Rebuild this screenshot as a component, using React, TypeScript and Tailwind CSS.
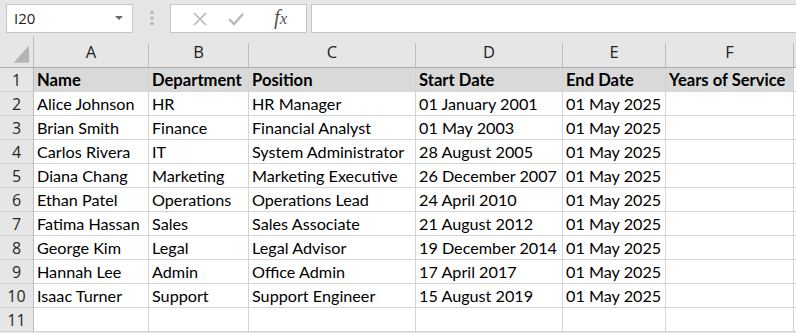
import React from "react";

const cols = [
  { l: "A", w: "w-[115px]" },
  { l: "B", w: "w-[100px]" },
  { l: "C", w: "w-[167px]" },
  { l: "D", w: "w-[147px]" },
  { l: "E", w: "w-[103px]" },
  { l: "F", w: "w-[128px]" },
];

const header = ["Name", "Department", "Position", "Start Date", "End Date", "Years of Service"];

const data: string[][] = [
  ["Alice Johnson", "HR", "HR Manager", "01 January 2001", "01 May 2025", ""],
  ["Brian Smith", "Finance", "Financial Analyst", "01 May 2003", "01 May 2025", ""],
  ["Carlos Rivera", "IT", "System Administrator", "28 August 2005", "01 May 2025", ""],
  ["Diana Chang", "Marketing", "Marketing Executive", "26 December 2007", "01 May 2025", ""],
  ["Ethan Patel", "Operations", "Operations Lead", "24 April 2010", "01 May 2025", ""],
  ["Fatima Hassan", "Sales", "Sales Associate", "21 August 2012", "01 May 2025", ""],
  ["George Kim", "Legal", "Legal Advisor", "19 December 2014", "01 May 2025", ""],
  ["Hannah Lee", "Admin", "Office Admin", "17 April 2017", "01 May 2025", ""],
  ["Isaac Turner", "Support", "Support Engineer", "15 August 2019", "01 May 2025", ""],
  ["", "", "", "", "", ""],
];

const cellFont = { fontFamily: "Lato, Carlito, Calibri, sans-serif" };
const uiFont = { fontFamily: "'Open Sans', 'Noto Sans', sans-serif" };

function Row({ n, cells, bold }: { n: number; cells: string[]; bold?: boolean }) {
  return (
    <div className="flex h-[24px]">
      <div
        className="w-[34px] shrink-0 h-full bg-[#e6e6e6] border-r border-b border-r-[#bdbdbd] border-b-[#d4d4d4] flex items-center justify-center text-[16px] text-[#262626]"
        style={uiFont}
      >
        {n}
      </div>
      {cols.map((c, i) => (
        <div
          key={i}
          className={`${c.w} shrink-0 h-full border-r border-b border-[#d4d4d4] flex items-end pb-[1px] pl-[3px] whitespace-nowrap overflow-visible leading-[20px] text-black ${
            bold ? "bg-[#d9d9d9] font-bold text-[16.6px]" : "bg-white text-[16.2px]"
          }`}
          style={cellFont}
        >
          {cells[i]}
        </div>
      ))}
      <div className="flex-1 h-full bg-white border-b border-[#d4d4d4]" />
    </div>
  );
}

export default function App() {
  return (
    <div className="w-[796px] h-[333px] overflow-hidden bg-[#e6e6e6] select-none">
      {/* formula bar */}
      <div className="flex items-center h-[36px]">
        <div
          className="ml-[6px] mt-[1px] w-[127px] h-[29px] bg-white border border-[#c6c6c6] flex items-center justify-between pl-[7px] pr-[9px] text-[15px] text-[#222]"
          style={uiFont}
        >
          <span>I20</span>
          <svg width="8" height="5" viewBox="0 0 8 5">
            <path d="M0 0 L8 0 L4 4 Z" fill="#6b6b6b" />
          </svg>
        </div>
        <div className="w-[37px] flex justify-center">
          <svg width="4" height="14" viewBox="0 0 4 14">
            <rect x="0.5" y="0" width="3" height="3" fill="#b5b5b5" />
            <rect x="0.5" y="5.5" width="3" height="3" fill="#b5b5b5" />
            <rect x="0.5" y="11" width="3" height="3" fill="#b5b5b5" />
          </svg>
        </div>
        <div className="mt-[1px] w-[137px] h-[29px] bg-white border border-[#c6c6c6] flex items-center">
          <div className="w-[40px] flex justify-end pr-[4px]">
            <svg width="14" height="14" viewBox="0 0 14 14">
              <path d="M1 1 L13 13 M13 1 L1 13" stroke="#b8b8b8" strokeWidth="1.6" />
            </svg>
          </div>
          <div className="w-[50px] flex justify-center">
            <svg width="16" height="14" viewBox="0 0 16 14">
              <path d="M1 7 L6 12 L15 2" stroke="#b8b8b8" strokeWidth="2.4" fill="none" />
            </svg>
          </div>
          <div
            className="flex-1 pl-[13px] text-[21px] italic text-[#555] leading-none -mt-[2px]"
            style={{ fontFamily: "'Liberation Serif', serif" }}
          >
            f<span className="text-[17px]">x</span>
          </div>
        </div>
        <div className="ml-[4px] mt-[1px] flex-1 h-[29px] bg-white border border-[#c6c6c6] border-r-0" />
      </div>

      {/* column headers */}
      <div className="flex h-[32px] border-b border-[#ababab]">
        <div className="w-[34px] shrink-0 h-full flex items-end border-r border-[#bdbdbd]">
          <svg width="34" height="31" viewBox="0 0 34 31" className="block">
            <path d="M30 9 L30 27 L14 27 Z" fill="#b4b4b4" />
          </svg>
        </div>
        {cols.map((c) => (
          <div key={c.l} className={`${c.w} shrink-0 h-full pt-[7px]`}>
            <div
              className="h-full border-r border-[#bdbdbd] flex items-center justify-center text-[16.5px] text-[#222] pb-[6px]"
              style={uiFont}
            >
              {c.l}
            </div>
          </div>
        ))}
        <div className="flex-1" />
      </div>

      <div className="flex flex-col">
        <Row n={1} cells={header} bold />
        {data.map((r, i) => (
          <Row key={i} n={i + 2} cells={r} />
        ))}
      </div>
    </div>
  );
}
